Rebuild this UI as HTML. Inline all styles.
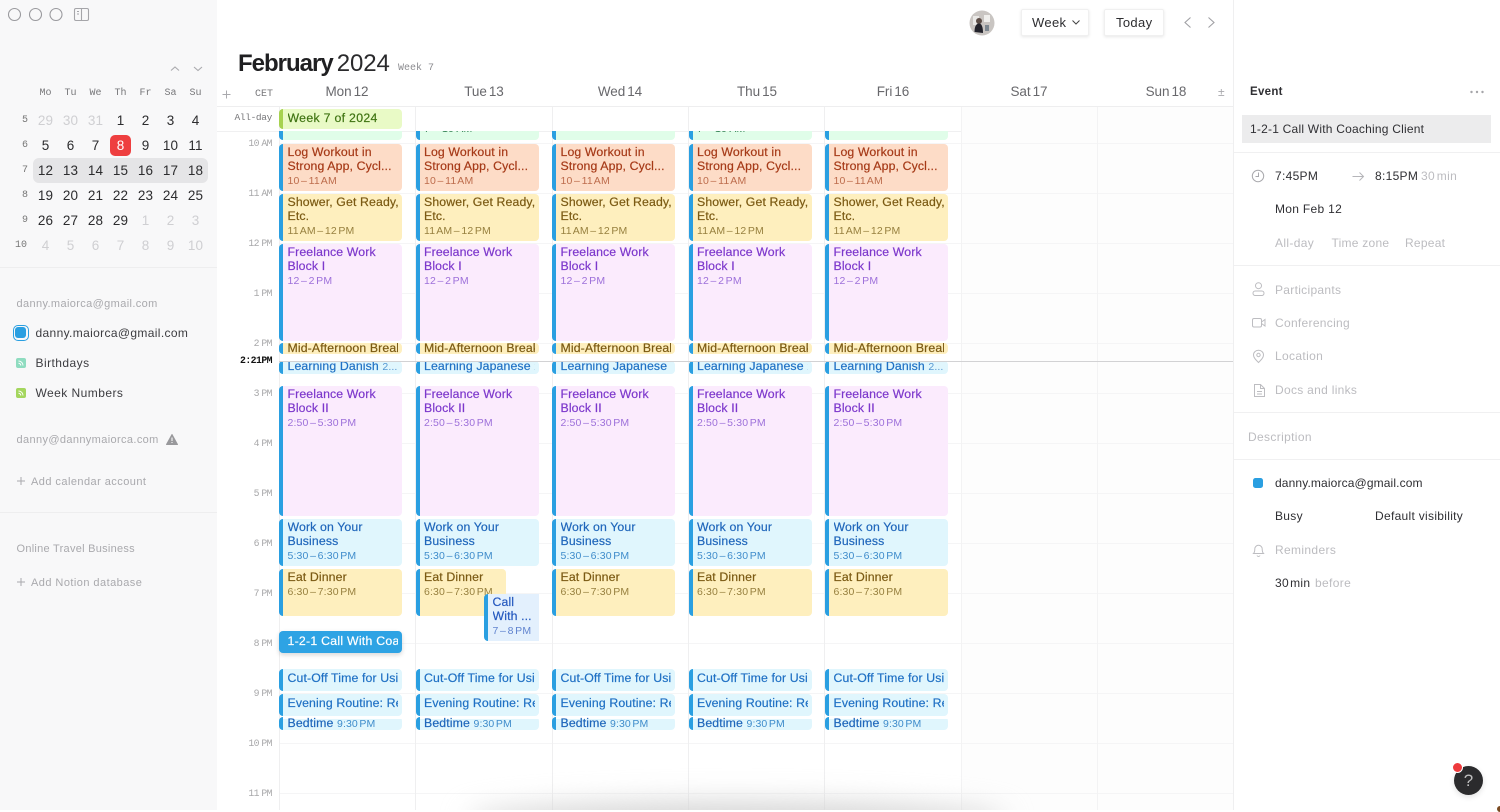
<!DOCTYPE html>
<html lang="en">
<head>
<meta charset="utf-8">
<title>Calendar</title>
<style>
*{box-sizing:border-box}
html,body{margin:0;padding:0;width:1500px;height:810px;overflow:hidden;background:#fff;font-family:"Liberation Sans",sans-serif}
.a{position:absolute;white-space:nowrap;line-height:14px}
.side{position:absolute;left:0;top:0;width:217px;height:810px;background:#f8f8f9}
.m{position:absolute;width:24px;margin-left:-12px;text-align:center;font-size:13.5px;line-height:16px;color:#2c2c2e;letter-spacing:.1px}
.m.o{color:#cfcfd2}
.wd{font-family:"Liberation Mono",monospace;font-size:10px;color:#77777a;top:87px}
.wn{font-family:"Liberation Mono",monospace;font-size:10px;color:#777;text-align:right;width:12px;margin:0;left:16px}
.s{font-size:11px;color:#a9a9ad;letter-spacing:.37px}
.r{font-size:12px;color:#3c3c40;letter-spacing:.35px}
.h{position:absolute;left:217px;width:55px;text-align:right;font-family:"Liberation Mono",monospace;font-size:9.8px;color:#a8a8aa;line-height:12px;letter-spacing:-.55px;word-spacing:-3px}
.d{position:absolute;width:100px;margin-left:-50px;text-align:center;top:84px;font-size:13.5px;line-height:16px;color:#68686c;letter-spacing:-.1px;word-spacing:-1.5px}
.hl{position:absolute;left:279px;width:954px;height:1px;background:#f5f5f6}
.vl{position:absolute;top:107px;height:703px;width:1px;background:#efeff0}
.e{position:absolute;width:123px;border-left:4px solid #2a9fe1;border-radius:4px;overflow:hidden}
.e p{margin:0 4px 0 4.5px;overflow:hidden;white-space:nowrap;font-size:12.3px;line-height:13.7px;letter-spacing:.12px;padding-top:2.4px;-webkit-text-stroke:.2px}
.e i{display:block;font-style:normal;font-size:10.5px;line-height:14px;letter-spacing:.15px;word-spacing:-1.5px;margin-top:.3px;-webkit-text-stroke:0}
.e s{text-decoration:none;font-size:10.5px;letter-spacing:.1px;word-spacing:-1.5px;-webkit-text-stroke:0}
.c1{left:279px}.c2{left:415.5px}.c3{left:552px}.c4{left:688.5px}.c5{left:825px}
.gr{top:131px;height:9px;background:#e0fde9;color:#2e7d4f;border-radius:0 0 4px 4px}
.gr p{margin-top:-8px;padding-top:0;font-size:10.5px;-webkit-text-stroke:0}
.lw{top:144px;height:46.5px;background:#fddcc7;color:#a63a18}.lw i{color:#bd6c4c}
.sh{top:194px;height:46.5px;background:#feefbe;color:#7b5a13}.sh i{color:#97803f}
.f1{top:244px;height:96.5px;background:#fbebfd;color:#7d38cc}.f1 i{color:#9d70da}
.mi{top:343px;height:11px;background:#feefbe;color:#7b5a13}.mi p{margin-top:-1px;padding-top:0}
.le{top:361px;height:12.5px;background:#e0f6fd;color:#1f70c4}.le p{margin-top:-1px;padding-top:0}.le s{color:#5597d2}
.f2{top:386px;height:129.5px;background:#fbebfd;color:#7d38cc}.f2 i{color:#9d70da}
.wo{top:519px;height:46.5px;background:#e0f6fd;color:#1f66bb}.wo i{color:#3f8ccb}
.ea{top:569px;height:46.5px;background:#feefbe;color:#7b5a13}.ea i{color:#97803f}
.cu{top:669px;height:21.5px;background:#e0f6fd;color:#1f70c4}.cu p{padding-top:3.4px}
.ev{top:694px;height:21.5px;background:#e0f6fd;color:#1f70c4}.ev p{padding-top:3.4px}
.be{top:717px;height:12.5px;background:linear-gradient(#fff 2px,#e0f6fd 2px);color:#1f66bb}.be p{margin-top:0;padding-top:0}.be s{color:#3f8ccb}
.t{font-size:12px;color:#2f2f33;letter-spacing:.3px}
.g{font-size:12px;color:#bcbcc0;letter-spacing:.35px}
.dv{position:absolute;left:1234px;width:266px;height:1px;background:#f0f0f1}
svg{position:absolute;overflow:visible}
</style>
</head>
<body>

<div class="side"></div>
<div style="position:absolute;left:-8px;top:-8px;width:14px;height:14px;border-radius:50%;border:5px solid #1d5c78;clip-path:inset(0 0 8px 0)"></div>

<!-- window controls -->
<svg style="left:0;top:0" width="100" height="30" fill="none" stroke="#9a9a9e" stroke-width="1.1">
<circle cx="14.5" cy="14.5" r="6"/><circle cx="35.5" cy="14.5" r="6"/><circle cx="56" cy="14.5" r="6"/>
<rect x="74.5" y="8.5" width="14" height="12" rx="1.5" stroke="#a5a5a9"/><path d="M81.5 8.5v12M77 11.5h2M77 14h2" stroke="#a5a5a9"/>
</svg>
<svg style="left:168px;top:62px" width="40" height="12" fill="none" stroke="#aaaaae" stroke-width="1.1"><path d="M3 8.5l4-3.5 4 3.5M26 5l4 3.5 4-3.5"/></svg>

<!-- mini calendar -->
<div style="position:absolute;left:33px;top:158px;width:175px;height:25px;background:#e5e5e7;border-radius:6px"></div>
<div style="position:absolute;left:110px;top:135px;width:21px;height:21px;background:#ee3f40;border-radius:5px"></div>

<div class="a wd" style="left:39.5px">Mo</div><div class="a wd" style="left:64.5px">Tu</div><div class="a wd" style="left:89.5px">We</div><div class="a wd" style="left:114.5px">Th</div><div class="a wd" style="left:139.5px">Fr</div><div class="a wd" style="left:164.5px">Sa</div><div class="a wd" style="left:189.5px">Su</div>

<div class="a wn" style="top:114px">5</div><div class="a wn" style="top:139px">6</div><div class="a wn" style="top:164px">7</div><div class="a wn" style="top:189px">8</div><div class="a wn" style="top:214px">9</div><div class="a wn" style="top:239px;left:15px">10</div>

<div class="m o" style="left:45.5px;top:113px">29</div><div class="m o" style="left:70.5px;top:113px">30</div><div class="m o" style="left:95.5px;top:113px">31</div><div class="m" style="left:120.5px;top:113px">1</div><div class="m" style="left:145.5px;top:113px">2</div><div class="m" style="left:170.5px;top:113px">3</div><div class="m" style="left:195.5px;top:113px">4</div>
<div class="m" style="left:45.5px;top:138px">5</div><div class="m" style="left:70.5px;top:138px">6</div><div class="m" style="left:95.5px;top:138px">7</div><div class="m" style="left:120.5px;top:138px;color:#fff">8</div><div class="m" style="left:145.5px;top:138px">9</div><div class="m" style="left:170.5px;top:138px">10</div><div class="m" style="left:195.5px;top:138px">11</div>
<div class="m" style="left:45.5px;top:163px">12</div><div class="m" style="left:70.5px;top:163px">13</div><div class="m" style="left:95.5px;top:163px">14</div><div class="m" style="left:120.5px;top:163px">15</div><div class="m" style="left:145.5px;top:163px">16</div><div class="m" style="left:170.5px;top:163px">17</div><div class="m" style="left:195.5px;top:163px">18</div>
<div class="m" style="left:45.5px;top:188px">19</div><div class="m" style="left:70.5px;top:188px">20</div><div class="m" style="left:95.5px;top:188px">21</div><div class="m" style="left:120.5px;top:188px">22</div><div class="m" style="left:145.5px;top:188px">23</div><div class="m" style="left:170.5px;top:188px">24</div><div class="m" style="left:195.5px;top:188px">25</div>
<div class="m" style="left:45.5px;top:213px">26</div><div class="m" style="left:70.5px;top:213px">27</div><div class="m" style="left:95.5px;top:213px">28</div><div class="m" style="left:120.5px;top:213px">29</div><div class="m o" style="left:145.5px;top:213px">1</div><div class="m o" style="left:170.5px;top:213px">2</div><div class="m o" style="left:195.5px;top:213px">3</div>
<div class="m o" style="left:45.5px;top:238px">4</div><div class="m o" style="left:70.5px;top:238px">5</div><div class="m o" style="left:95.5px;top:238px">6</div><div class="m o" style="left:120.5px;top:238px">7</div><div class="m o" style="left:145.5px;top:238px">8</div><div class="m o" style="left:170.5px;top:238px">9</div><div class="m o" style="left:195.5px;top:238px">10</div>

<div style="position:absolute;left:0;top:267px;width:217px;height:1px;background:#eeeeef"></div>
<div style="position:absolute;left:0;top:512px;width:217px;height:1px;background:#eeeeef"></div>

<!-- calendars -->
<div class="a s" style="left:16.5px;top:297px;letter-spacing:.37px">danny.maiorca@gmail.com</div>
<div style="position:absolute;left:13px;top:325px;width:16px;height:16px;border:1.5px solid #2a9fe1;border-radius:5px;padding:1px"><div style="width:11px;height:11px;background:#2a9fe1;border-radius:3px"></div></div>
<div class="a r" style="left:35.5px;top:326px">danny.maiorca@gmail.com</div>
<div style="position:absolute;left:16px;top:358px;width:10px;height:10px;background:#8fdcc0;border-radius:2px"></div>
<svg style="left:16px;top:358px" width="10" height="10" fill="none" stroke="#fff" stroke-width="1"><path d="M2.5 3a4.5 4.5 0 0 1 4.5 4.5M2.5 5.2a2.3 2.3 0 0 1 2.3 2.3"/></svg>
<div class="a r" style="left:35.5px;top:356px;letter-spacing:.45px">Birthdays</div>
<div style="position:absolute;left:16px;top:388px;width:10px;height:10px;background:#a4d65e;border-radius:2px"></div>
<svg style="left:16px;top:388px" width="10" height="10" fill="none" stroke="#fff" stroke-width="1"><path d="M2.5 3a4.5 4.5 0 0 1 4.5 4.5M2.5 5.2a2.3 2.3 0 0 1 2.3 2.3"/></svg>
<div class="a r" style="left:35.5px;top:386px;letter-spacing:.45px">Week Numbers</div>
<div class="a s" style="left:16.5px;top:433px">danny@dannymaiorca.com</div>
<svg style="left:166px;top:434px" width="12" height="11"><path d="M6 .5L11.5 10.5H.5z" fill="#99999c" stroke="#99999c" stroke-linejoin="round"/><path d="M6 3.5v3.5M6 8v1" stroke="#f8f8f9" stroke-width="1.1"/></svg>
<svg style="left:16px;top:476px" width="10" height="10" stroke="#a9a9ad" stroke-width="1"><path d="M1 5h8M5 1v8"/></svg>
<div class="a s" style="left:31px;top:474.5px;letter-spacing:.45px">Add calendar account</div>
<div class="a s" style="left:16.5px;top:541.5px;letter-spacing:.27px">Online Travel Business</div>
<svg style="left:16px;top:577px" width="10" height="10" stroke="#a9a9ad" stroke-width="1"><path d="M1 5h8M5 1v8"/></svg>
<div class="a s" style="left:31px;top:576px;letter-spacing:.45px">Add Notion database</div>

<!-- header -->
<div class="a" style="left:238px;top:48px;font-size:24px;line-height:32px;color:#1f1f21;letter-spacing:-1px"><b>February</b><span style="letter-spacing:-.1px;margin-left:4px;color:#2a2a2c">2024</span></div>
<div class="a" style="left:398px;top:62px;font-family:'Liberation Mono',monospace;font-size:10px;color:#8c8c90">Week 7</div>

<svg style="left:969px;top:9.5px" width="26" height="26">
<circle cx="13" cy="13" r="12.5" fill="#c9c5c2"/>
<rect x="4" y="6" width="6" height="9" fill="#e9e8e6"/><rect x="15" y="5" width="6" height="7" fill="#efeeec"/>
<circle cx="10" cy="11" r="3" fill="#5b4c46"/>
<path d="M5.5 22c0-6 2-8.5 4.5-8.5s4 3 4 9.5z" fill="#23232b"/><rect x="16" y="15" width="4" height="6" fill="#7d8790"/>
</svg>
<div style="position:absolute;left:1021px;top:9px;width:68px;height:27px;background:#fff;border:1px solid #f0f0f0;border-radius:2px;box-shadow:0 1px 3px rgba(0,0,0,.1)"></div>
<div class="a" style="left:1032px;top:16px;font-size:13px;color:#2d2d30;letter-spacing:.35px">Week</div>
<svg style="left:1071px;top:19px" width="10" height="7" fill="none" stroke="#444" stroke-width="1"><path d="M1.5 1.5l3.5 3.5 3.5-3.5"/></svg>
<div style="position:absolute;left:1104px;top:9px;width:60px;height:27px;background:#fff;border:1px solid #f0f0f0;border-radius:2px;box-shadow:0 1px 3px rgba(0,0,0,.1)"></div>
<div class="a" style="left:1116px;top:16px;font-size:13px;color:#2d2d30;letter-spacing:.35px">Today</div>
<svg style="left:1182px;top:16px" width="35" height="13" fill="none" stroke="#a0a0a4" stroke-width="1.1"><path d="M8.5 1.5L3 6.5l5.5 5M26.5 1.5l5.5 5-5.5 5"/></svg>

<!-- day header row -->
<svg style="left:222px;top:90px" width="9" height="9" stroke="#a9a9ad" stroke-width="1"><path d="M.5 4.5h8M4.5 .5v8"/></svg>
<div class="a" style="left:255px;top:88px;font-family:'Liberation Mono',monospace;font-size:10px;color:#77777a">CET</div>
<div class="d" style="left:347px">Mon 12</div><div class="d" style="left:484px">Tue 13</div><div class="d" style="left:620px">Wed 14</div><div class="d" style="left:757px">Thu 15</div><div class="d" style="left:893px">Fri 16</div><div class="d" style="left:1029px">Sat 17</div><div class="d" style="left:1166px">Sun 18</div>
<div class="a" style="left:1218px;top:85px;font-size:12px;color:#a9a9ad">±</div>

<!-- grid -->
<div style="position:absolute;left:217px;top:106px;width:1016px;height:1px;background:#eeeeef"></div>
<div style="position:absolute;left:217px;top:131px;width:744px;height:1px;background:#f0f0f1"></div>
<div style="position:absolute;left:961px;top:107px;width:272px;height:703px;background:#fdfdfd"></div>
<div class="hl" style="top:143px"></div><div class="hl" style="top:193px"></div><div class="hl" style="top:243px"></div><div class="hl" style="top:293px"></div><div class="hl" style="top:343px"></div><div class="hl" style="top:393px"></div><div class="hl" style="top:443px"></div><div class="hl" style="top:493px"></div><div class="hl" style="top:543px"></div><div class="hl" style="top:593px"></div><div class="hl" style="top:643px"></div><div class="hl" style="top:693px"></div><div class="hl" style="top:743px"></div><div class="hl" style="top:793px"></div>
<div class="vl" style="left:278.5px"></div><div class="vl" style="left:415px"></div><div class="vl" style="left:551.5px"></div><div class="vl" style="left:688px"></div><div class="vl" style="left:824px"></div><div class="vl" style="left:961px;background:#f3f3f4"></div><div class="vl" style="left:1097px;background:#f3f3f4"></div>
<div style="position:absolute;left:1233px;top:0;width:1px;height:810px;background:#efeff0"></div>

<div class="a" style="left:217px;width:55px;text-align:right;top:111px;font-family:'Liberation Mono',monospace;font-size:9.5px;color:#77777a;letter-spacing:-.35px">All-day</div>
<div class="h" style="top:138px">10 AM</div><div class="h" style="top:188px">11 AM</div><div class="h" style="top:238px">12 PM</div><div class="h" style="top:288px">1 PM</div><div class="h" style="top:338px">2 PM</div><div class="h" style="top:388px">3 PM</div><div class="h" style="top:438px">4 PM</div><div class="h" style="top:488px">5 PM</div><div class="h" style="top:538px">6 PM</div><div class="h" style="top:588px">7 PM</div><div class="h" style="top:638px">8 PM</div><div class="h" style="top:688px">9 PM</div><div class="h" style="top:738px">10 PM</div><div class="h" style="top:788px">11 PM</div>
<div class="h" style="top:355px;color:#111;font-weight:bold;word-spacing:0">2:21PM</div>

<!-- all-day event -->
<div class="e c1" style="top:109px;height:20px;background:#e9fac6;color:#3f7412;border-left-color:#a6d24f"><p style="padding-top:3.4px;letter-spacing:.3px">Week 7 of 2024</p></div>

<!-- Monday -->
<div class="e c1 gr"><p>&nbsp;</p></div>
<div class="e c1 lw"><p>Log Workout in<br>Strong App, Cycl...<i>10 – 11 AM</i></p></div>
<div class="e c1 sh"><p>Shower, Get Ready,<br>Etc.<i>11 AM – 12 PM</i></p></div>
<div class="e c1 f1"><p>Freelance Work<br>Block I<i>12 – 2 PM</i></p></div>
<div class="e c1 mi"><p>Mid-Afternoon Break</p></div>
<div class="e c1 le"><p>Learning Danish <s>2...</s></p></div>
<div class="e c1 f2"><p>Freelance Work<br>Block II<i>2:50 – 5:30 PM</i></p></div>
<div class="e c1 wo"><p>Work on Your<br>Business<i>5:30 – 6:30 PM</i></p></div>
<div class="e c1 ea"><p>Eat Dinner<i>6:30 – 7:30 PM</i></p></div>
<div class="e c1" style="top:631px;height:22px;background:#2ea3e4;border-left:0;color:#fff;box-shadow:0 2px 5px rgba(0,0,0,.16)"><p style="margin-left:8.5px;padding-top:4px;letter-spacing:.25px">1-2-1 Call With Coaching</p></div>
<div class="e c1 cu"><p>Cut-Off Time for Using</p></div>
<div class="e c1 ev"><p>Evening Routine: Read</p></div>
<div class="e c1 be"><p>Bedtime <s>9:30 PM</s></p></div>

<!-- Tuesday -->
<div class="e c2 gr"><p>7 – 10 AM</p></div>
<div class="e c2 lw"><p>Log Workout in<br>Strong App, Cycl...<i>10 – 11 AM</i></p></div>
<div class="e c2 sh"><p>Shower, Get Ready,<br>Etc.<i>11 AM – 12 PM</i></p></div>
<div class="e c2 f1"><p>Freelance Work<br>Block I<i>12 – 2 PM</i></p></div>
<div class="e c2 mi"><p>Mid-Afternoon Break</p></div>
<div class="e c2 le"><p>Learning Japanese <s>2...</s></p></div>
<div class="e c2 f2"><p>Freelance Work<br>Block II<i>2:50 – 5:30 PM</i></p></div>
<div class="e c2 wo"><p>Work on Your<br>Business<i>5:30 – 6:30 PM</i></p></div>
<div class="e c2 ea" style="width:90px"><p>Eat Dinner<i>6:30 – 7:30 PM</i></p></div>
<div class="e" style="left:484px;top:594px;width:55px;height:46.5px;background:#e3f0fd;color:#2559bf;border-radius:4px 0 0 4px"><p>Call<br>With ...<i style="color:#6184cf">7 – 8 PM</i></p></div>
<div class="e c2 cu"><p>Cut-Off Time for Using</p></div>
<div class="e c2 ev"><p>Evening Routine: Read</p></div>
<div class="e c2 be"><p>Bedtime <s>9:30 PM</s></p></div>

<!-- Wednesday -->
<div class="e c3 gr"><p>&nbsp;</p></div>
<div class="e c3 lw"><p>Log Workout in<br>Strong App, Cycl...<i>10 – 11 AM</i></p></div>
<div class="e c3 sh"><p>Shower, Get Ready,<br>Etc.<i>11 AM – 12 PM</i></p></div>
<div class="e c3 f1"><p>Freelance Work<br>Block I<i>12 – 2 PM</i></p></div>
<div class="e c3 mi"><p>Mid-Afternoon Break</p></div>
<div class="e c3 le"><p>Learning Japanese <s>2...</s></p></div>
<div class="e c3 f2"><p>Freelance Work<br>Block II<i>2:50 – 5:30 PM</i></p></div>
<div class="e c3 wo"><p>Work on Your<br>Business<i>5:30 – 6:30 PM</i></p></div>
<div class="e c3 ea"><p>Eat Dinner<i>6:30 – 7:30 PM</i></p></div>
<div class="e c3 cu"><p>Cut-Off Time for Using</p></div>
<div class="e c3 ev"><p>Evening Routine: Read</p></div>
<div class="e c3 be"><p>Bedtime <s>9:30 PM</s></p></div>

<!-- Thursday -->
<div class="e c4 gr"><p>7 – 10 AM</p></div>
<div class="e c4 lw"><p>Log Workout in<br>Strong App, Cycl...<i>10 – 11 AM</i></p></div>
<div class="e c4 sh"><p>Shower, Get Ready,<br>Etc.<i>11 AM – 12 PM</i></p></div>
<div class="e c4 f1"><p>Freelance Work<br>Block I<i>12 – 2 PM</i></p></div>
<div class="e c4 mi"><p>Mid-Afternoon Break</p></div>
<div class="e c4 le"><p>Learning Japanese <s>2...</s></p></div>
<div class="e c4 f2"><p>Freelance Work<br>Block II<i>2:50 – 5:30 PM</i></p></div>
<div class="e c4 wo"><p>Work on Your<br>Business<i>5:30 – 6:30 PM</i></p></div>
<div class="e c4 ea"><p>Eat Dinner<i>6:30 – 7:30 PM</i></p></div>
<div class="e c4 cu"><p>Cut-Off Time for Using</p></div>
<div class="e c4 ev"><p>Evening Routine: Read</p></div>
<div class="e c4 be"><p>Bedtime <s>9:30 PM</s></p></div>

<!-- Friday -->
<div class="e c5 gr"><p>&nbsp;</p></div>
<div class="e c5 lw"><p>Log Workout in<br>Strong App, Cycl...<i>10 – 11 AM</i></p></div>
<div class="e c5 sh"><p>Shower, Get Ready,<br>Etc.<i>11 AM – 12 PM</i></p></div>
<div class="e c5 f1"><p>Freelance Work<br>Block I<i>12 – 2 PM</i></p></div>
<div class="e c5 mi"><p>Mid-Afternoon Break</p></div>
<div class="e c5 le"><p>Learning Danish <s>2...</s></p></div>
<div class="e c5 f2"><p>Freelance Work<br>Block II<i>2:50 – 5:30 PM</i></p></div>
<div class="e c5 wo"><p>Work on Your<br>Business<i>5:30 – 6:30 PM</i></p></div>
<div class="e c5 ea"><p>Eat Dinner<i>6:30 – 7:30 PM</i></p></div>
<div class="e c5 cu"><p>Cut-Off Time for Using</p></div>
<div class="e c5 ev"><p>Evening Routine: Read</p></div>
<div class="e c5 be"><p>Bedtime <s>9:30 PM</s></p></div>

<!-- current time line -->
<div style="position:absolute;left:279px;top:361px;width:954px;height:1px;background:#d2d2d4"></div>

<!-- bottom shadow -->
<div style="position:absolute;left:217px;top:740px;width:1016px;height:70px;overflow:hidden;pointer-events:none">
<div style="position:absolute;left:250px;top:62px;width:540px;height:36px;border-radius:50%;background:#d4d4d4;filter:blur(14px)"></div>
</div>

<!-- right panel -->
<div class="a" style="left:1250px;top:85px;font-size:11.5px;font-weight:bold;color:#2f2f33;letter-spacing:.3px">Event</div>
<svg style="left:1470px;top:89.5px" width="14" height="4" fill="#a5a5a9"><circle cx="1.5" cy="2" r="1.2"/><circle cx="7" cy="2" r="1.2"/><circle cx="12.5" cy="2" r="1.2"/></svg>
<div style="position:absolute;left:1242px;top:115px;width:249px;height:28px;background:#ececed"></div>
<div class="a t" style="left:1250px;top:122px;letter-spacing:.22px">1-2-1 Call With Coaching Client</div>
<div class="dv" style="top:152px"></div>

<svg style="left:1251px;top:169px" width="14" height="14" fill="none" stroke="#a9a9ad" stroke-width="1"><circle cx="7" cy="7" r="5.7"/><path d="M7.5 3.5v4H4.5"/></svg>
<div class="a t" style="left:1275px;top:169px">7:45PM</div>
<svg style="left:1352px;top:171px" width="13" height="11" fill="none" stroke="#b5b5b9" stroke-width="1"><path d="M.5 5.5h11M7.5 1.5l4 4-4 4"/></svg>
<div class="a t" style="left:1375px;top:169px">8:15PM</div>
<div class="a g" style="left:1421px;top:169px;word-spacing:-2px">30 min</div>
<div class="a t" style="left:1275px;top:202px">Mon Feb 12</div>
<div class="a g" style="left:1275px;top:236px">All-day</div>
<div class="a g" style="left:1331.5px;top:236px;letter-spacing:.25px">Time zone</div>
<div class="a g" style="left:1405px;top:236px;letter-spacing:.25px">Repeat</div>
<div class="dv" style="top:265px"></div>

<svg style="left:1252px;top:282px" width="13" height="14" fill="none" stroke="#bdbdc1" stroke-width="1"><circle cx="6.5" cy="3.7" r="3"/><rect x="1" y="9" width="11" height="4.5" rx="2.2"/></svg>
<div class="a g" style="left:1275px;top:282.5px;letter-spacing:.3px">Participants</div>
<svg style="left:1252px;top:318px" width="14" height="10" fill="none" stroke="#bdbdc1" stroke-width="1"><rect x=".5" y=".5" width="9" height="8.5" rx="1.5"/><path d="M9.5 4l3.5-2.5v6.500L9.5 5.5"/></svg>
<div class="a g" style="left:1275px;top:316px;letter-spacing:.3px">Conferencing</div>
<svg style="left:1253px;top:350px" width="11" height="13" fill="none" stroke="#bdbdc1" stroke-width="1"><path d="M5.5 12.5C2.5 9.5 .5 7.5 .5 5a5 4.7 0 0 1 10 0c0 2.5-2 4.5-5 7.5z"/><circle cx="5.5" cy="5" r="1.7"/></svg>
<div class="a g" style="left:1275px;top:349px">Location</div>
<svg style="left:1254px;top:384px" width="11" height="13" fill="none" stroke="#bdbdc1" stroke-width="1"><path d="M.5 .5h6l4 4v8H.5zM6.5 .5v4h4M3 7.5h5M3 10h5"/></svg>
<div class="a g" style="left:1275px;top:382.5px;letter-spacing:.3px">Docs and links</div>
<div class="dv" style="top:412px"></div>
<div class="a g" style="left:1248px;top:429.5px">Description</div>
<div class="dv" style="top:459px"></div>

<div style="position:absolute;left:1253px;top:478px;width:10px;height:10px;background:#2a9fe1;border-radius:2.5px"></div>
<div class="a t" style="left:1275px;top:476px;letter-spacing:.13px">danny.maiorca@gmail.com</div>
<div class="a t" style="left:1275px;top:509px">Busy</div>
<div class="a t" style="left:1375px;top:509px">Default visibility</div>
<svg style="left:1253px;top:543px" width="11" height="14" fill="none" stroke="#bdbdc1" stroke-width="1"><path d="M.5 10.5c1-1 1.3-2 1.3-4.500a3.7 3.7 0 0 1 7.400 0c0 2.500.3 3.500 1.300 4.500zM4 12.500a1.600 1.600 0 0 0 3 0"/></svg>
<div class="a g" style="left:1275px;top:542.5px">Reminders</div>
<div class="a t" style="left:1275px;top:576px;word-spacing:-2.5px">30 min</div>
<div class="a g" style="left:1315px;top:576px">before</div>

<!-- help -->
<div style="position:absolute;left:1454px;top:765.5px;width:29px;height:29px;border-radius:50%;background:#2b2b2d;box-shadow:0 2px 6px rgba(0,0,0,.12);color:#bdbdbd;font-size:17px;line-height:29px;text-align:center">?</div>
<div style="position:absolute;left:1451.5px;top:761.5px;width:11px;height:11px;border-radius:50%;background:#ee3a3c;border:1px solid #fff"></div>
<div style="position:absolute;left:1497px;top:806px;width:6px;height:6px;background:#7a4a20;border-radius:50%"></div>

</body>
</html>
